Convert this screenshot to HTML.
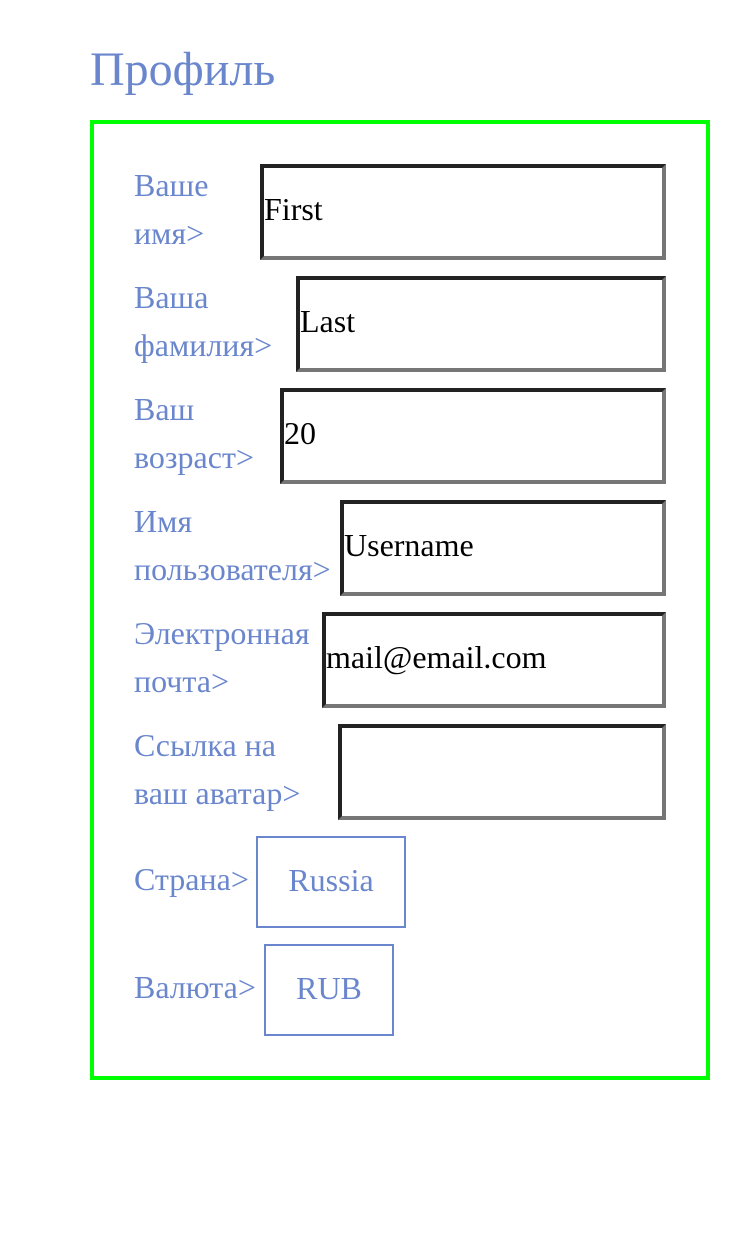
<!DOCTYPE html>
<html><head><meta charset="utf-8"><style>
body{margin:0;width:750px;height:1234px;background:#fff;font-family:"Liberation Serif","Noto Serif CJK SC",serif;position:relative;overflow:hidden}
.t{position:absolute;left:90px;top:40px;font-size:48px;color:#6a86cc;line-height:60px}
.g{position:absolute;left:90px;top:120px;width:612px;height:952px;border:4px solid #00ff00}
.l{position:absolute;left:134px;font-size:32px;line-height:48px;color:#6a86cc;white-space:nowrap}
.i{position:absolute;right:84px;height:96px;border:4px solid;border-color:#222 #767676 #767676 #222;box-sizing:border-box;font-size:32px;color:#000;line-height:82px;padding-left:0;white-space:nowrap}
.s{position:absolute;border:2px solid #6a86cc;box-sizing:border-box;font-size:32px;color:#6a86cc;text-align:center}
</style></head><body>
<div class="t">Профиль</div>
<div class="g"></div>
<div class="l" style="top:161px">Ваше<br>имя&gt;</div>
<div class="i" style="top:164px;left:260px">First</div>
<div class="l" style="top:273px">Ваша<br>фамилия&gt;</div>
<div class="i" style="top:276px;left:296px">Last</div>
<div class="l" style="top:385px">Ваш<br>возраст&gt;</div>
<div class="i" style="top:388px;left:280px">20</div>
<div class="l" style="top:497px">Имя<br>пользователя&gt;</div>
<div class="i" style="top:500px;left:340px">Username</div>
<div class="l" style="top:609px">Электронная<br>почта&gt;</div>
<div class="i" style="top:612px;left:322px">mail@email.com</div>
<div class="l" style="top:721px">Ссылка на<br>ваш аватар&gt;</div>
<div class="i" style="top:724px;left:338px"></div>
<div class="l" style="top:855px">Страна&gt;</div>
<div class="s" style="left:256px;top:836px;width:150px;height:92px;line-height:84px">Russia</div>
<div class="l" style="top:963px">Валюта&gt;</div>
<div class="s" style="left:264px;top:944px;width:130px;height:92px;line-height:84px">RUB</div>
</body></html>
